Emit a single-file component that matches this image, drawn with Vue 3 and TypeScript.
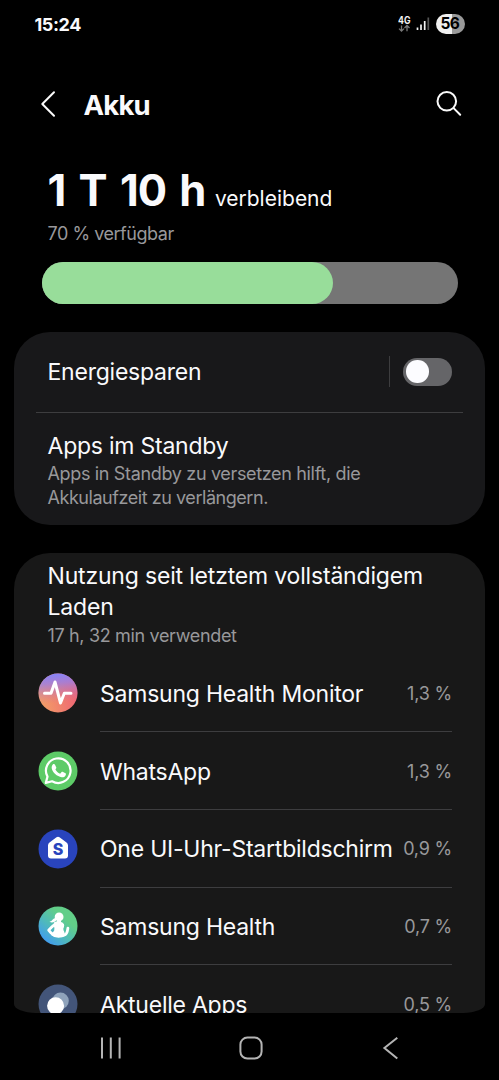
<script setup lang="ts">
interface AppUsage {
  id: string
  name: string
  share: string
}

const charge = 70
const apps: AppUsage[] = [
  { id: 'monitor', name: 'Samsung Health Monitor', share: '1,3 %' },
  { id: 'whatsapp', name: 'WhatsApp', share: '1,3 %' },
  { id: 'watch', name: 'One UI-Uhr-Startbildschirm', share: '0,9 %' },
  { id: 'health', name: 'Samsung Health', share: '0,7 %' },
  { id: 'recent', name: 'Aktuelle Apps', share: '0,5 %' },
]
</script>

<template>
  <main class="screen">
    <div class="status">
      <span class="clock">15:24</span>
      <div class="indicators">
        <svg class="network" width="14" height="18" viewBox="0 0 14 18">
          <text x="0" y="8.5" class="network-label" textLength="12.5" lengthAdjust="spacingAndGlyphs">4G</text>
          <path d="M3.5 10.5v5.5M1 13.6l2.5 2.5L6 13.6M9 16.2v-5.5M6.5 13L9 10.500l2.500 2.500" />
        </svg>
        <svg class="signal" width="14" height="14" viewBox="0 0 14 14">
          <path d="M1.500 13v-2.500M5 13V7.500M8.700 13V4" stroke="#f2f2f2" />
          <path d="M12.300 13V0.500" stroke="#555" />
        </svg>
        <span class="battery">56</span>
      </div>
    </div>

    <header class="header">
      <svg class="back" width="16" height="28" viewBox="0 0 16 28">
        <path d="M14 2.200L2.300 14L14 25.800" />
      </svg>
      <h1>Akku</h1>
      <svg class="search" width="28" height="28" viewBox="0 0 28 28">
        <circle cx="11.800" cy="11.300" r="9.300" />
        <path d="M18.600 18.100l6.600 6.600" />
      </svg>
    </header>

    <section class="summary">
      <p class="remaining"><strong>1 T 10 h</strong><span>verbleibend</span></p>
      <p class="available">{{ charge }} % verfügbar</p>
      <div class="meter"><div class="meter-fill" :style="{ width: charge + '%' }"></div></div>
    </section>

    <section class="card options">
      <div class="saver">
        <span class="title">Energiesparen</span>
        <i class="bar"></i>
        <span class="toggle"><i></i></span>
      </div>
      <div class="standby">
        <p class="title">Apps im Standby</p>
        <p class="sub">Apps in Standby zu versetzen hilft, die<br /><span class="second-line">Akkulaufzeit zu verlängern.</span></p>
      </div>
    </section>

    <section class="card usage">
      <div class="usage-head">
        <p class="title">Nutzung seit letztem vollständigem<br />Laden</p>
        <p class="sub used-time">17 h, 32 min verwendet</p>
      </div>
      <div v-for="app in apps" :key="app.id" class="row">
        <svg class="icon" width="40" height="40" viewBox="0 0 40 40">
          <defs>
            <linearGradient id="warm" x1="0" y1="0.700" x2="1" y2="0.500">
              <stop offset="0" stop-color="#f3a266" />
              <stop offset="1" stop-color="#ee6274" />
            </linearGradient>
            <linearGradient id="violet" x1="0.450" y1="0" x2="0.550" y2="1">
              <stop offset="0" stop-color="#8583fa" />
              <stop offset="0.250" stop-color="#9a80e6" stop-opacity="0.800" />
              <stop offset="0.750" stop-color="#d677a0" stop-opacity="0" />
            </linearGradient>
            <linearGradient id="fitness" x1="0.850" y1="0.100" x2="0.150" y2="0.900">
              <stop offset="0.250" stop-color="#62ce88" />
              <stop offset="0.600" stop-color="#50bbb8" />
              <stop offset="1" stop-color="#419bf2" />
            </linearGradient>
          </defs>
          <template v-if="app.id === 'monitor'">
            <circle cx="20" cy="20" r="19.500" fill="url(#warm)" />
            <circle cx="20" cy="20" r="19.500" fill="url(#violet)" />
            <path class="line pulse" d="M6.500 20.300h6.500l4-11.300 5.500 21 3.800-9.700H33" />
          </template>
          <template v-else-if="app.id === 'whatsapp'">
            <circle cx="20" cy="20" r="19.500" fill="#5dcb67" />
            <path class="line" stroke-width="2.200" d="M7.800 31.900l1.700-6.300A12.300 12.300 0 1 1 14.100 30.300Z" />
            <path fill="#fff" d="M15 13.300c.6-.6 1.500-.5 1.900.2l1.400 3c.2.600-.1 1-.9 2 1.100 2 2.500 3.300 4.700 4.200l1.500-1.700c.3-.3.600-.3 1-.2l2.900 1.400c.5.300.5.600.4 1.200-.4 2-2.300 3.100-4.200 2.900-4.600-.7-9.400-5-10-9-.2-1.600.5-3.200 1.300-4z" />
          </template>
          <template v-else-if="app.id === 'watch'">
            <circle cx="20" cy="20" r="19.500" fill="#2944bd" />
            <path fill="#fff" d="M18.500 8.300q1.500-1.200 3 0l7 5.300q1.500 1.200 1.500 3V26.500q0 3-3 3H13q-3 0-3-3V16.600q0-1.800 1.500-3z" />
            <text x="20.100" y="25.900" class="watch-letter">S</text>
          </template>
          <template v-else-if="app.id === 'health'">
            <circle cx="20" cy="20" r="19.500" fill="url(#fitness)" />
            <circle cx="21.100" cy="10.900" r="4.400" fill="#fff" />
            <path fill="#fff" d="M18.400 11.800q-2.900.3-3.900 2-.8 1.500-3 2 2.100 1.300 4.700.3 2.300-1.200 2.600-3z" />
            <path fill="#fff" d="M18.800 14h4.200v2q3.200 1 3.200 3.500 0 1.500-.9 3.300 0 1.500.9 3l1.300 3.700q-2.800 2.300-7.100 2.300-4.200 0-7.500-2.800l3.300-4.500q.7-2.700-.4-4.600l.2-3.300q1.200-.8 2.800-1z" />
            <path class="line arm" d="M17.500 17.900q-4 3-6.800 6.300 2.200 3.500 6.300 5.300M25.500 29.300q2.200-.3 2.900-1.800 1.100-2.300 1.500-5.300" />
          </template>
          <template v-else>
            <circle cx="20" cy="20" r="19.500" fill="#435579" />
            <circle cx="22.500" cy="16.800" r="8.300" fill="#8fa3bb" />
            <circle cx="17.600" cy="21.800" r="8.500" fill="#fff" />
          </template>
        </svg>
        <div class="row-body">
          <span class="title">{{ app.name }}</span>
          <span class="share">{{ app.share }}</span>
        </div>
      </div>
    </section>

    <nav class="nav">
      <svg width="24" height="24" viewBox="0 0 24 24"><path d="M3 1.500v21M11.800 1.500v21M20.600 1.500v21" /></svg>
      <svg width="24" height="24" viewBox="0 0 24 24"><rect x="1.400" y="1.600" width="21.200" height="21" rx="7" /></svg>
      <svg width="24" height="24" viewBox="0 0 24 24"><path d="M18.300 1.700L5.400 12l12.900 10.600" /></svg>
    </nav>
  </main>
</template>

<style>
body {
  background: #000;
}
</style>

<style scoped>
.screen {
  width: 499px;
  height: 1080px;
  overflow: hidden;
  background: #000;
  color: #fafafc;
  font-family: Inter, "Noto Sans", sans-serif;
  display: flex;
  flex-direction: column;
  box-sizing: border-box;
}
p,
h1 {
  margin: 0;
}
.line,
.header path,
.header circle,
.signal path,
.network path,
.nav path,
.nav rect {
  fill: none;
}
.status {
  height: 48px;
  padding: 0 34px 0 34.500px;
  display: flex;
  align-items: center;
  justify-content: space-between;
  flex: none;
}
.clock {
  font-size: 18px;
  font-weight: 700;
  letter-spacing: -0.4px;
}
.indicators {
  display: flex;
  align-items: center;
}
.network {
  margin-right: 4px;
}
.network-label {
  font-size: 10px;
  font-weight: 700;
  fill: #f2f2f2;
}
.network path {
  stroke: #777;
  stroke-width: 1.3;
}
.signal {
  margin-right: 6px;
}
.signal path {
  stroke-width: 1.7;
}
.battery {
  width: 29px;
  height: 20px;
  border-radius: 10px;
  background: linear-gradient(90deg, #f0f0f0 56%, #999 56%);
  color: #000;
  font-size: 15.5px;
  line-height: 20px;
  font-weight: 700;
  letter-spacing: -0.8px;
  text-indent: -1.5px;
  text-align: center;
}
.header {
  height: 112px;
  padding: 0 36px 0 40px;
  display: flex;
  align-items: center;
  flex: none;
}
.header path,
.header circle {
  stroke: #fafafa;
  stroke-width: 2;
  stroke-linecap: round;
  stroke-linejoin: round;
}
.header h1 {
  margin-left: 27.500px;
  padding-top: 1px;
  font-size: 27.5px;
  font-weight: 700;
  line-height: 34px;
  letter-spacing: -0.8px;
}
.search {
  margin-left: auto;
}
.summary {
  height: 171.500px;
  padding: 4.500px 41.500px 0;
  box-sizing: border-box;
  flex: none;
}
.remaining,
.available {
  padding-left: 6px;
  white-space: nowrap;
}
.remaining {
  height: 52px;
  line-height: 51px;
}
.remaining strong {
  font-size: 43.500px;
  font-weight: 700;
  letter-spacing: -1px;
  word-spacing: 4px;
}
.remaining span {
  font-size: 21px;
  margin-left: 9.500px;
}
.available {
  line-height: 24px;
  margin-top: 5px;
  font-size: 18px;
  letter-spacing: -0.47px;
  color: #98989b;
}
.meter {
  height: 41.500px;
  margin-top: 16.500px;
  border-radius: 21px;
  background: #757575;
}
.meter-fill {
  height: 100%;
  border-radius: 21px;
  background: #98dd9a;
}
.card {
  margin: 0 14px;
  background: #18181a;
  border-radius: 36px;
  box-sizing: border-box;
  flex: none;
}
.options {
  height: 193px;
}
.saver {
  height: 81px;
  margin: 0 22px;
  padding: 0 11px 0 11.500px;
  box-sizing: border-box;
  border-bottom: 1px solid #3d3d3f;
  display: flex;
  align-items: center;
}
.saver .title {
  padding-top: 2px;
}
.bar {
  width: 1px;
  height: 31px;
  margin-left: auto;
  background: #3d3d3f;
}
.toggle {
  width: 49px;
  height: 28px;
  margin-left: 13px;
  border-radius: 14px;
  background: #656568;
  display: flex;
  align-items: center;
  box-sizing: border-box;
  padding-left: 3px;
}
.toggle i {
  width: 22.500px;
  height: 22.500px;
  border-radius: 50%;
  background: #fcfcff;
}
.title {
  font-size: 23px;
  line-height: 31px;
  letter-spacing: -0.23px;
  white-space: nowrap;
}
.sub {
  font-size: 18px;
  line-height: 24px;
  letter-spacing: -0.34px;
  color: #98989b;
  white-space: nowrap;
}
.second-line {
  letter-spacing: -0.45px;
}
.standby {
  padding: 18px 33.500px 0;
}
.used-time {
  padding-top: 1px;
}
.usage .usage-head .title {
  letter-spacing: -0.18px;
}
.usage {
  height: 460.500px;
  margin-top: 28px;
  background: #181818;
  border-radius: 36px 36px 22px 22px / 36px 36px 9px 9px;
  overflow: hidden;
}
.usage-head {
  height: 102px;
  padding: 8px 33.500px 0;
  box-sizing: border-box;
}
.row {
  height: 77.700px;
  padding: 0 33px 0 24px;
  display: flex;
  align-items: center;
}
.icon {
  margin-right: 22px;
  flex: none;
}
.row-body {
  height: 100%;
  flex: 1;
  padding-top: 3px;
  display: flex;
  align-items: center;
  justify-content: space-between;
  box-sizing: border-box;
  border-bottom: 1px solid #3d3d3f;
}
.share {
  padding-bottom: 1.500px;
  font-size: 18px;
  letter-spacing: -0.2px;
  color: #98989b;
}
.line {
  stroke: #fff;
  stroke-linejoin: round;
  stroke-linecap: round;
}
.pulse {
  stroke-width: 3;
}
.arm {
  stroke-width: 2.8;
}
.watch-letter {
  font-size: 16px;
  font-weight: 800;
  text-anchor: middle;
  fill: #2944bd;
}
.nav {
  flex: 1;
  padding: 3px 96px 0 98.700px;
  display: flex;
  align-items: center;
  justify-content: space-between;
}
.nav path,
.nav rect {
  stroke: #b4b4b4;
  stroke-width: 2;
}
</style>
